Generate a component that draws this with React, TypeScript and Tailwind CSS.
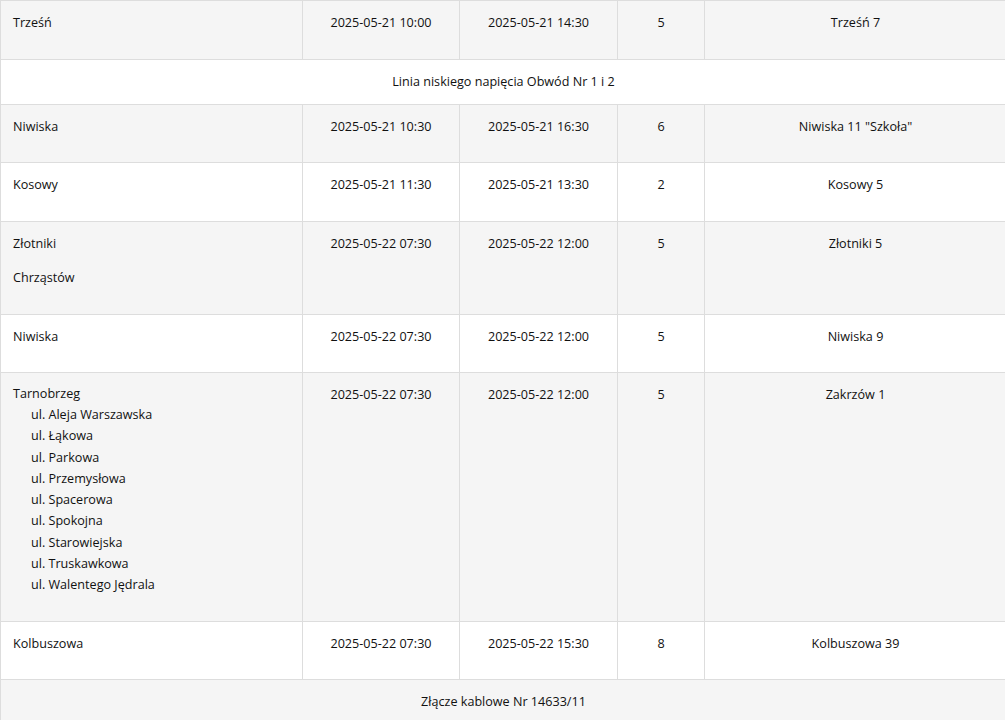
import React from 'react';

type Row =
  | { kind: 'section'; title: string }
  | {
      kind: 'row';
      places: string[];
      streets?: string[];
      start: string;
      end: string;
      count: number;
      station: string;
    };

const rows: Row[] = [
  { kind: 'row', places: ['Trześń'], start: '2025-05-21 10:00', end: '2025-05-21 14:30', count: 5, station: 'Trześń 7' },
  { kind: 'section', title: 'Linia niskiego napięcia Obwód Nr 1 i 2' },
  { kind: 'row', places: ['Niwiska'], start: '2025-05-21 10:30', end: '2025-05-21 16:30', count: 6, station: 'Niwiska 11 "Szkoła"' },
  { kind: 'row', places: ['Kosowy'], start: '2025-05-21 11:30', end: '2025-05-21 13:30', count: 2, station: 'Kosowy 5' },
  { kind: 'row', places: ['Złotniki', 'Chrząstów'], start: '2025-05-22 07:30', end: '2025-05-22 12:00', count: 5, station: 'Złotniki 5' },
  { kind: 'row', places: ['Niwiska'], start: '2025-05-22 07:30', end: '2025-05-22 12:00', count: 5, station: 'Niwiska 9' },
  {
    kind: 'row',
    places: ['Tarnobrzeg'],
    streets: [
      'ul. Aleja Warszawska',
      'ul. Łąkowa',
      'ul. Parkowa',
      'ul. Przemysłowa',
      'ul. Spacerowa',
      'ul. Spokojna',
      'ul. Starowiejska',
      'ul. Truskawkowa',
      'ul. Walentego Jędrala',
    ],
    start: '2025-05-22 07:30',
    end: '2025-05-22 12:00',
    count: 5,
    station: 'Zakrzów 1',
  },
  { kind: 'row', places: ['Kolbuszowa'], start: '2025-05-22 07:30', end: '2025-05-22 15:30', count: 8, station: 'Kolbuszowa 39' },
  { kind: 'section', title: 'Złącze kablowe Nr 14633/11' },
];

const cell = 'border border-[#dddddd] px-[12px] pt-[11px] pb-[12px] align-top';

export default function App() {
  return (
    <div
      className="min-h-screen bg-white text-[12.6px] leading-[21px] text-[#111111] overflow-hidden"
      style={{ fontFamily: '"Open Sans", "Noto Sans", Arial, sans-serif' }}
    >
      <table className="table-fixed border-collapse w-[1006px]">
        <colgroup>
          <col className="w-[302px]" />
          <col className="w-[157px]" />
          <col className="w-[158px]" />
          <col className="w-[87px]" />
          <col className="w-[302px]" />
        </colgroup>
        <tbody>
          {rows.map((row, i) => {
            const bg = i % 2 === 0 ? 'bg-[#f5f5f5]' : 'bg-white';
            if (row.kind === 'section') {
              return (
                <tr key={i} className={bg}>
                  <td colSpan={5} className={`${cell} text-center`}>
                    {row.title}
                  </td>
                </tr>
              );
            }
            return (
              <tr key={i} className={bg}>
                <td className={cell}>
                  {row.streets ? (
                    <div className="mb-[13.5px]">
                      <div className="leading-[20px]">{row.places[0]}</div>
                      <ul className="pl-[18px] leading-[21.25px]">
                        {row.streets.map((s) => (
                          <li key={s}>{s}</li>
                        ))}
                      </ul>
                    </div>
                  ) : (
                    row.places.map((p) => (
                      <p key={p} className="mb-[13.5px]">
                        {p}
                      </p>
                    ))
                  )}
                </td>
                <td className={`${cell} text-center`}>{row.start}</td>
                <td className={`${cell} text-center`}>{row.end}</td>
                <td className={`${cell} text-center`}>{row.count}</td>
                <td className={`${cell} text-center`}>{row.station}</td>
              </tr>
            );
          })}
        </tbody>
      </table>
    </div>
  );
}
